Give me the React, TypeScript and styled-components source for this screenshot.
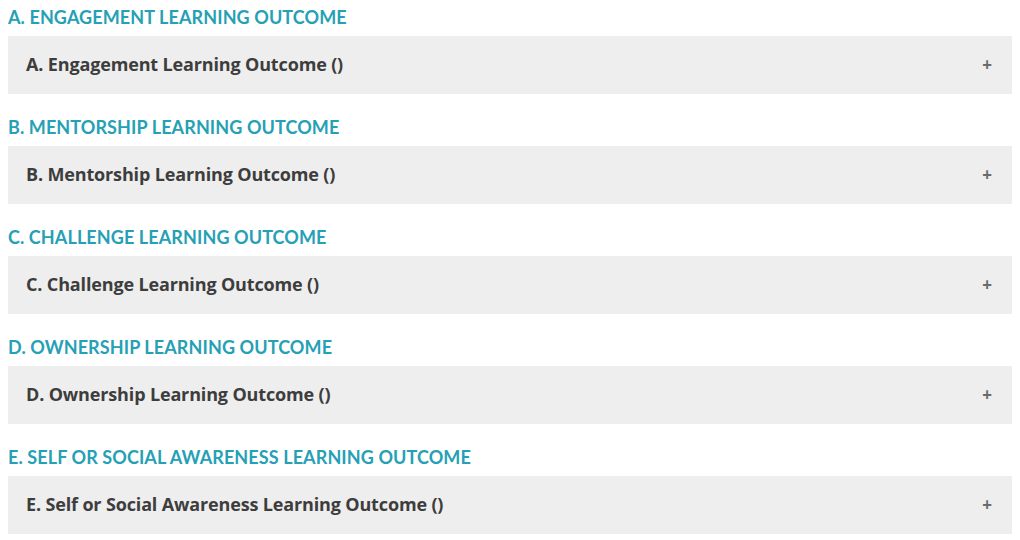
import React from "react";
import styled, { createGlobalStyle } from "styled-components";

const Global = createGlobalStyle`
  body {
    margin: 8px;
    background: #ffffff;
    font-family: Lato, "Open Sans", sans-serif;
  }
`;

const List = styled.div`
  display: flex;
  flex-direction: column;
  gap: 24px;
`;

const Section = styled.section`
  display: flex;
  flex-direction: column;
  gap: 8px;
`;

const Heading = styled.h3`
  margin: 0;
  padding-bottom: 2px;
  font-family: Lato, sans-serif;
  font-size: 18px;
  line-height: 18px;
  font-weight: 700;
  color: #25a0b5;
  letter-spacing: 0.1px;
`;

const Panel = styled.button`
  display: flex;
  align-items: center;
  justify-content: space-between;
  height: 58px;
  width: 100%;
  padding: 0 18px 3px 18px;
  border: none;
  background: #eeeeee;
  cursor: pointer;
  font-family: inherit;
  text-align: left;
`;

const PanelTitle = styled.span`
  font-family: "Open Sans", sans-serif;
  font-size: 18px;
  font-weight: 700;
  color: #3d3d3d;
  letter-spacing: -0.15px;
`;

const Plus = styled.span`
  font-family: "Open Sans", sans-serif;
  font-size: 17px;
  font-weight: 700;
  color: #6b6b6b;
  margin-right: 2px;
  margin-top: 1px;
`;

const items = [
  ["A. ENGAGEMENT LEARNING OUTCOME", "A. Engagement Learning Outcome ()"],
  ["B. MENTORSHIP LEARNING OUTCOME", "B. Mentorship Learning Outcome ()"],
  ["C. CHALLENGE LEARNING OUTCOME", "C. Challenge Learning Outcome ()"],
  ["D. OWNERSHIP LEARNING OUTCOME", "D. Ownership Learning Outcome ()"],
  ["E. SELF OR SOCIAL AWARENESS LEARNING OUTCOME", "E. Self or Social Awareness Learning Outcome ()"],
];

export default function App() {
  return (
    <>
      <Global />
      <List>
        {items.map(([h, t]) => (
          <Section key={h}>
            <Heading>{h}</Heading>
            <Panel>
              <PanelTitle>{t}</PanelTitle>
              <Plus>+</Plus>
            </Panel>
          </Section>
        ))}
      </List>
    </>
  );
}
